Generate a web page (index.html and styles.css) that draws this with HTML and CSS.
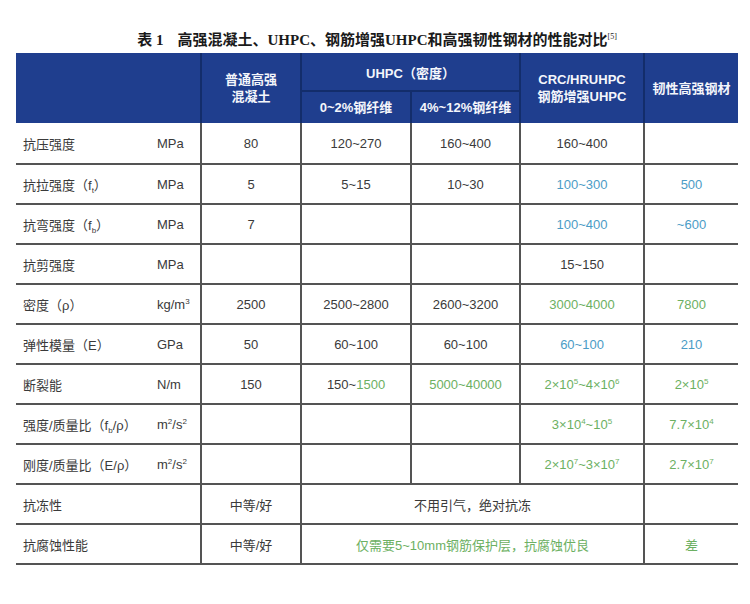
FILE: index.html
```html
<!DOCTYPE html>
<html lang="zh-CN">
<head>
<meta charset="utf-8">
<title>表1 性能对比</title>
<link rel="stylesheet" href="styles.css">
</head>
<body>
<div class="page">
  <h1 class="title"><span class="tno">表 1</span>高强混凝土、UHPC、钢筋增强UHPC和高强韧性钢材的性能对比<sup>[5]</sup></h1>
  <table class="tbl">
    <colgroup>
      <col class="c-label"><col class="c-unit"><col class="c-nc"><col class="c-u1"><col class="c-u2"><col class="c-crc"><col class="c-steel">
    </colgroup>
    <thead>
      <tr class="h1">
        <th colspan="2" rowspan="2" class="first"></th>
        <th rowspan="2">普通高强<br>混凝土</th>
        <th colspan="2" class="uhpc">UHPC（密度）</th>
        <th rowspan="2">CRC/HRUHPC<br>钢筋增强UHPC</th>
        <th rowspan="2">韧性高强钢材</th>
      </tr>
      <tr class="h2">
        <th class="sub">0~2%钢纤维</th>
        <th class="sub">4%~12%钢纤维</th>
      </tr>
    </thead>
    <tbody>
      <tr>
        <td class="lbl">抗压强度</td><td class="unit">MPa</td>
        <td>80</td><td>120~270</td><td>160~400</td><td>160~400</td><td></td>
      </tr>
      <tr>
        <td class="lbl">抗拉强度（f<sub>t</sub>）</td><td class="unit">MPa</td>
        <td>5</td><td>5~15</td><td>10~30</td><td class="b">100~300</td><td class="b">500</td>
      </tr>
      <tr>
        <td class="lbl">抗弯强度（f<sub>b</sub>）</td><td class="unit">MPa</td>
        <td>7</td><td></td><td></td><td class="b">100~400</td><td class="b">~600</td>
      </tr>
      <tr>
        <td class="lbl">抗剪强度</td><td class="unit">MPa</td>
        <td></td><td></td><td></td><td>15~150</td><td></td>
      </tr>
      <tr>
        <td class="lbl">密度（ρ）</td><td class="unit">kg/m<sup>3</sup></td>
        <td>2500</td><td>2500~2800</td><td>2600~3200</td><td class="g">3000~4000</td><td class="g">7800</td>
      </tr>
      <tr>
        <td class="lbl">弹性模量（E）</td><td class="unit">GPa</td>
        <td>50</td><td>60~100</td><td>60~100</td><td class="b">60~100</td><td class="b">210</td>
      </tr>
      <tr>
        <td class="lbl">断裂能</td><td class="unit">N/m</td>
        <td>150</td><td>150~<span class="g">1500</span></td><td class="g">5000~40000</td><td class="g">2×10<sup>5</sup>~4×10<sup>6</sup></td><td class="g">2×10<sup>5</sup></td>
      </tr>
      <tr>
        <td class="lbl">强度/质量比（f<sub>b</sub>/ρ）</td><td class="unit">m<sup>2</sup>/s<sup>2</sup></td>
        <td></td><td></td><td></td><td class="g">3×10<sup>4</sup>~10<sup>5</sup></td><td class="g">7.7×10<sup>4</sup></td>
      </tr>
      <tr>
        <td class="lbl">刚度/质量比（E/ρ）</td><td class="unit">m<sup>2</sup>/s<sup>2</sup></td>
        <td></td><td></td><td></td><td class="g">2×10<sup>7</sup>~3×10<sup>7</sup></td><td class="g">2.7×10<sup>7</sup></td>
      </tr>
      <tr>
        <td class="lbl" colspan="2">抗冻性</td>
        <td>中等/好</td><td colspan="3">不用引气，绝对抗冻</td><td></td>
      </tr>
      <tr>
        <td class="lbl" colspan="2">抗腐蚀性能</td>
        <td>中等/好</td><td colspan="3" class="g">仅需要5~10mm钢筋保护层，抗腐蚀优良</td><td class="g">差</td>
      </tr>
    </tbody>
  </table>
</div>
</body>
</html>
```
FILE: styles.css
```css
html, body {
  margin: 0;
  padding: 0;
  background: #ffffff;
}

.page {
  padding: 0 12px 0 16px;
  width: 722px;
}

.title {
  margin: 31px 0 3px 0;
  height: 19px;
  line-height: 19px;
  font-family: "Liberation Serif", "Noto Sans CJK SC", serif;
  font-size: 15px;
  font-weight: bold;
  color: #1a1a1a;
  text-align: center;
  white-space: nowrap;
}

.title .tno {
  margin-right: 14px;
}

.title sup {
  font-size: 8px;
  line-height: 0;
  vertical-align: 6px;
  font-weight: normal;
}

.tbl {
  width: 722px;
  border-collapse: separate;
  border-spacing: 0;
  table-layout: fixed;
  font-family: "Liberation Sans", "Noto Sans CJK SC", sans-serif;
  font-size: 13px;
  color: #3a3a3a;
}

.c-label { width: 134px; }
.c-unit { width: 50px; }
.c-nc { width: 100px; }
.c-u1 { width: 110px; }
.c-u2 { width: 109px; }
.c-crc { width: 124px; }
.c-steel { width: 95px; }

thead th {
  background: #1f3e8e;
  color: #f4f6fb;
  font-weight: bold;
  font-size: 13px;
  line-height: 17px;
  padding: 0;
  text-align: center;
  vertical-align: middle;
  border-left: 2px solid #132d6b;
}

thead th.first {
  border-left: none;
}

.h1 {
  height: 37px;
}

.h2 {
  height: 33px;
}

th.uhpc {
  padding-top: 4px;
}

th.sub {
  border-top: 2px solid #132d6b;
}

tbody tr {
  height: 40px;
}

tbody td {
  padding: 0;
  text-align: center;
  vertical-align: middle;
  border-bottom: 2px solid #545454;
  border-left: 2px solid #545454;
  white-space: nowrap;
}

tbody td.lbl {
  border-left: none;
  text-align: left;
  padding-left: 7px;
}

tbody td.unit {
  border-left: none;
  text-align: left;
  padding-left: 7px;
}

tbody tr:first-child td {
  height: 40px;
}

.b {
  color: #4b9cc6;
}

.g {
  color: #6cb062;
}

sub {
  font-size: 8px;
  line-height: 0;
  vertical-align: -3px;
}

sup {
  font-size: 8px;
  line-height: 0;
  vertical-align: 5px;
}
```
